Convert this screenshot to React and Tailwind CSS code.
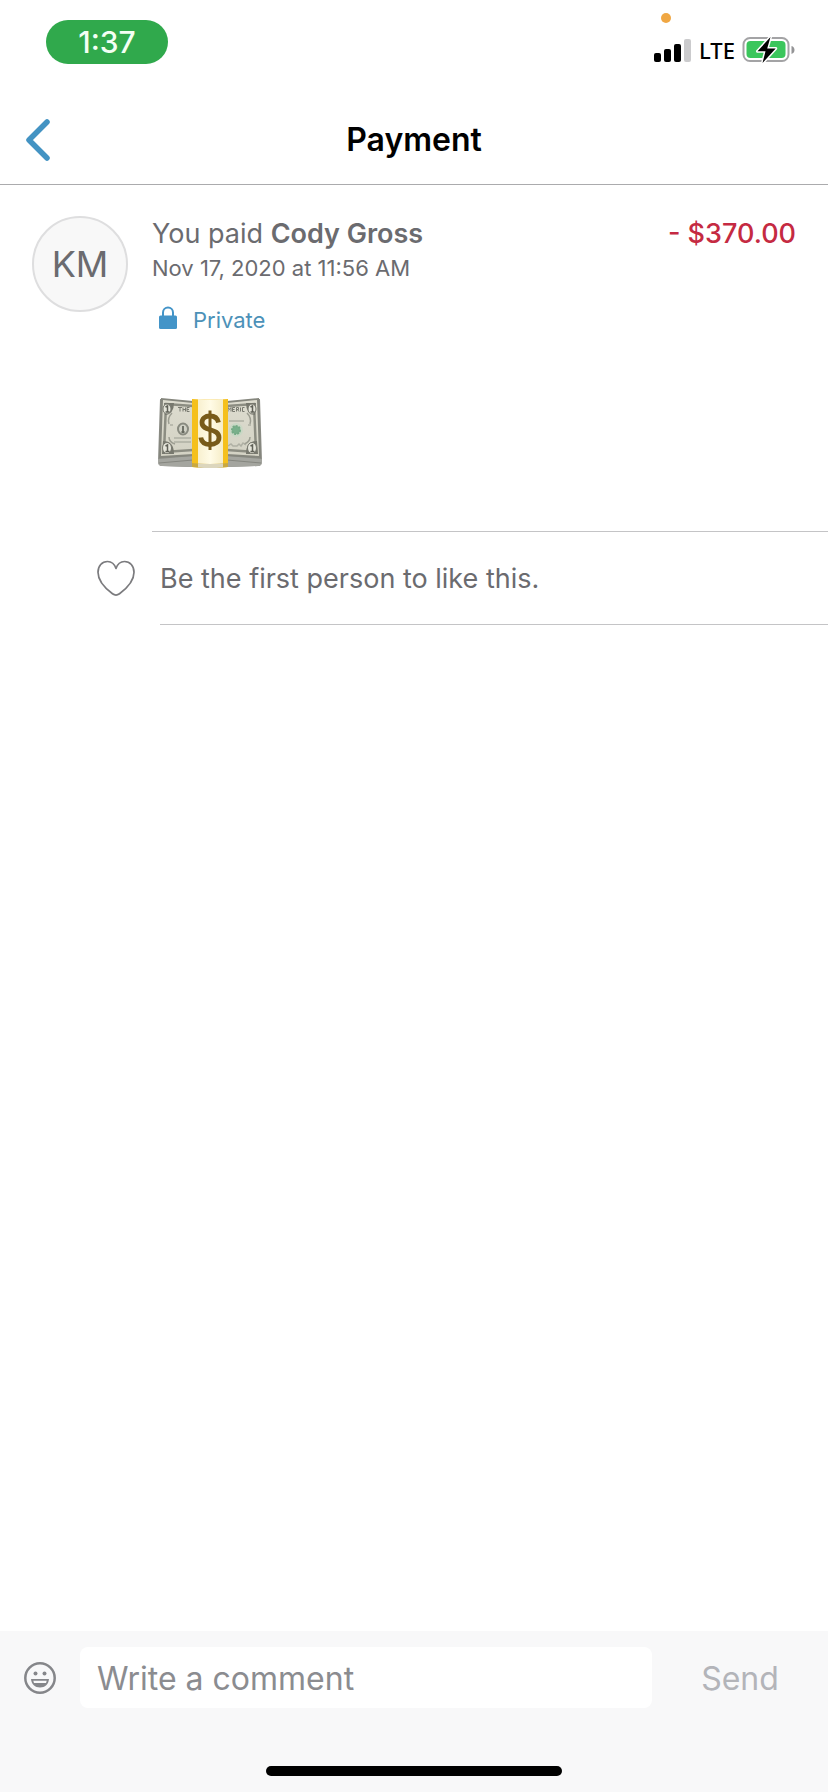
import React from "react";

function StatusBar() {
  return (
    <div className="flex h-24 items-start justify-between pl-[46px] pr-8">
      <div className="mt-5 flex h-11 w-[122px] items-center justify-center rounded-full bg-[#30a94c] text-[30px] leading-none font-medium text-[#f3fff4]">
        1:37
      </div>
      <div className="flex flex-col">
        <span className="mt-[13px] ml-[7px] size-[10px] rounded-full bg-[#f0a743]" />
        <div className="mt-3 flex items-center gap-[7px]">
          <svg width="38" height="28" viewBox="0 0 38 28" aria-label="Signal strength">
            <rect x="0" y="17" width="7" height="9" rx="2" />
            <rect x="10" y="13" width="7" height="13" rx="2" />
            <rect x="20" y="8" width="7" height="18" rx="2" />
            <rect x="30" y="3" width="7" height="23" rx="2" fill="#cbcbcd" />
          </svg>
          <span className="font-['Noto_Sans','Open_Sans',sans-serif] text-[22px] leading-7 font-medium">LTE</span>
          <svg width="54" height="30" viewBox="0 0 54 30" aria-label="Battery charging">
            <rect x="1.5" y="3" width="45" height="23" rx="6.5" fill="#fff" stroke="#a3a3a5" strokeWidth="2" />
            <rect x="4.500" y="6" width="39" height="17" rx="4" fill="#3bc65c" />
            <path d="M49.500 11v8c2-.6 3-2.200 3-4s-1-3.400-3-4z" fill="#949496" />
            <path
              d="M28.500 2 15.500 16.300h8L20.500 28l13.200-14.600h-8.500z"
              fill="#000"
              stroke="#fff"
              strokeWidth="3"
              strokeLinejoin="round"
              paintOrder="stroke"
            />
          </svg>
        </div>
      </div>
    </div>
  );
}

function Header() {
  return (
    <header className="border-b border-[#ababad] text-black">
      <StatusBar />
      <div className="grid h-[88px] grid-cols-[1fr_auto_1fr] items-center px-6">
        <button type="button" aria-label="Back" className="justify-self-start">
          <svg width="28" height="44" viewBox="0 0 28 44" fill="none" className="block">
            <path d="M23 4 5 22l18 18" stroke="#4393c3" strokeWidth="5.500" strokeLinecap="round" strokeLinejoin="round" />
          </svg>
        </button>
        <h1 className="text-[32px] leading-10 font-semibold text-black">Payment</h1>
      </div>
    </header>
  );
}

function CashStack() {
  return (
    <svg width="104" height="72" viewBox="0 0 104 72" role="img" aria-label="Stack of dollar bills" className="block">
      <defs>
        <linearGradient id="paper" x1="0" y1="0" x2="0" y2="1">
          <stop offset="0" stopColor="#dddccf" />
          <stop offset="1" stopColor="#d3d2c4" />
        </linearGradient>
        <linearGradient id="band" x1="0" y1="0" x2="1" y2="0">
          <stop offset="0" stopColor="#f8f0cf" />
          <stop offset=".5" stopColor="#fffbe6" />
          <stop offset="1" stopColor="#f6edc8" />
        </linearGradient>
      </defs>
      <path d="M2 1 34 4h36l32-3 2 62q0 5-4 5l-30 1H34L4 68q-4 0-4-5z" fill="#8a8b84" />
      <path d="M0 61 35 58h34l35 3v3q0 4-4 4l-31 1H35L4 68q-4 0-4-4z" fill="#a4a59f" />
      <path d="M1 65 35 62h34l34 3" fill="none" stroke="#85867f" />
      <path d="M3 0 35 3h34l32-3 2 60-34-2H35L1 60z" fill="#85867d" />
      <path d="M5 2 35 5h34l30-3 2 56-32-2H35L3 58z" fill="url(#paper)" />
      <path d="M8 6 35 8h34l27-2 2 48-29-2H35L6 54z" fill="none" stroke="#8c8d82" strokeWidth="2.500" />
      <path d="M6 5h10q0 11-9 12zM98 5H88q0 11 9 12zM4 56h12q0-13-11-13zM100 56H88q0-13 11-13z" fill="#77786e" />
      <g fill="#e5e5da" stroke="#77786e">
        <ellipse cx="9" cy="11" rx="4" ry="5" />
        <ellipse cx="94" cy="11" rx="4" ry="5" />
        <ellipse cx="9" cy="50" rx="4.500" ry="5.500" />
        <ellipse cx="94" cy="50" rx="4.500" ry="5.500" />
      </g>
      <path
        d="m7.500 9 2-1v6m-2 0h4M92.500 9l2-1v6m-2 0h4M7.500 48l2-1v6.500m-2 0h4M92.500 48l2-1v6.500m-2 0h4"
        fill="none"
        stroke="#5f6057"
        strokeWidth="1.500"
      />
      <g stroke="#797a70" strokeWidth="1" fill="none">
        <path d="M20 9.500h4m-2 0v4m3-4v4m0-2h2.500m0-2v4m4-4h-2.500v4h2.500m-2.500-2h2" />
        <path d="M70 13.500v-4l1.500 2 1.500-2v4m4-4h-2.500v4h2.500m-2.500-2h2m2 2v-4h2v2h-2m1 0 1.500 2m1.500-4v4m4-4h-2v4h2" />
      </g>
      <path d="M14 15q-5 5-3 11M89 15q5 5 3 11M11 39q0 5 6 7M92 39q0 5-6 7" fill="none" stroke="#9d9e92" strokeWidth="1.500" />
      <ellipse cx="25" cy="31" rx="5" ry="5.500" fill="#d0d1c5" stroke="#898b80" strokeWidth="2" />
      <path d="M25 28v6m-1.500 0h3" fill="none" stroke="#66695f" strokeWidth="1.800" />
      <circle cx="78" cy="32" r="7" fill="#c9d8c5" />
      <circle cx="78" cy="32" r="4" fill="#79b08b" stroke="#74aa85" strokeDasharray="2 1" strokeWidth="2" />
      <path d="M16 40h17M16 44h17M12 27h3M71 23h15M70 48l3-2 2 2h4l2-2 2 2 2-3 3 2M90 27h3" stroke="#afb0a4" strokeWidth="1.500" fill="none" />
      <path d="M34 1q18 1 36 0v68q-18 2-36 0z" fill="#f5c01d" />
      <path d="M40 1q12 1 25 0v65q-13 1-25 0z" fill="url(#band)" />
      <path d="M34 65q18 2 36 0v4q-18 2-36 0z" fill="#c9a840" />
      <path d="M40 65.500q12 1 25 0v4q-13 1-25 0z" fill="#dcd6bd" />
      <g fill="none" stroke="#785b19">
        <path d="M60.500 24.500c-1-4.500-4.500-6.500-8.500-6.500-5 0-8 2.600-8 6.500 0 4.700 4 6 8.200 7.200 4.600 1.300 8.800 2.800 8.800 7.800 0 4.500-3.600 7-9 7-5.200 0-8.500-2.500-9.200-7" strokeWidth="4.800" />
        <path d="M52 12.500V52" strokeWidth="3" />
      </g>
    </svg>
  );
}

function Payment() {
  return (
    <section className="flex pt-[31px] pl-8">
      <div className="flex size-24 shrink-0 items-center justify-center rounded-full border-2 border-[#dededf] bg-[#f8f8f8] text-[36px] text-[#6b6b6f]">
        KM
      </div>
      <div className="ml-6 flex-1">
        <div className="pr-8">
          <div className="flex justify-between text-[27px] leading-9">
            <p>
              You paid <span className="font-semibold">Cody Gross</span>
            </p>
            <p className="font-medium text-[#c52a42]">- $370.00</p>
          </div>
          <p className="text-[22px] leading-8">Nov 17, 2020 at 11:56 AM</p>
          <p className="mt-5 flex items-center pl-[7px] text-[22px] leading-8 text-[#4c91b8]">
            <svg width="18" height="24" viewBox="0 0 18 24" fill="none" aria-hidden="true" className="-mt-1">
              <path d="M4 11V6.500a5 5 0 0 1 10 0V11" stroke="#4394c8" strokeWidth="2" />
              <rect y="9.500" width="18" height="13.500" rx="1.500" fill="#4394c8" />
            </svg>
            <span className="ml-4">Private</span>
          </p>
        </div>
        <div className="border-b border-[#c4c4c6] pt-[62px] pb-[61px] pl-[6px]">
          <CashStack />
        </div>
      </div>
    </section>
  );
}

function Likes() {
  return (
    <section className="flex pl-24">
      <button type="button" aria-label="Like" className="w-16 shrink-0">
        <svg width="40" height="38" viewBox="0 0 40 38" fill="none" className="block">
          <path
            d="M20 8.500C18.500 4 15.500 1.500 11.500 1.500 6 1.500 2 6 2 12.300 2 21.500 10 29 16.500 33.800q3.500 2.600 7 0C30 29 38 21.500 38 12.300 38 6 34 1.500 28.500 1.500c-4 0-7 2.500-8.500 7z"
            stroke="#7b7b7e"
            strokeWidth="1.700"
            strokeLinejoin="round"
          />
        </svg>
      </button>
      <p className="flex h-[93px] flex-1 items-center border-b border-[#c4c4c6] pt-[2px] text-[27px]">
        Be the first person to like this.
      </p>
    </section>
  );
}

function Composer() {
  return (
    <footer className="bg-[#f8f8f9]">
      <form className="flex items-center pt-4 pl-6" onSubmit={(e) => e.preventDefault()}>
        <button type="button" aria-label="Insert emoji">
          <svg width="32" height="32" viewBox="0 0 32 32" fill="none" className="block">
            <circle cx="16" cy="16" r="14.700" stroke="#85868a" strokeWidth="2.500" />
            <circle cx="11.500" cy="11.500" r="2" fill="#85868a" />
            <circle cx="20.500" cy="11.500" r="2" fill="#85868a" />
            <path d="M7 17h18c-.4 5-4 8.500-9 8.500S7.400 22 7 17z" fill="#85868a" />
            <path d="M9.300 18.800h13.400l-.7 2.200H10z" fill="#f8f8f9" />
          </svg>
        </button>
        <input
          type="text"
          aria-label="Write a comment"
          placeholder="Write a comment"
          className="ml-6 h-[61px] min-w-0 flex-1 rounded-lg bg-white pt-[2px] pr-4 pl-[17px] text-[32px] text-[#6b6b6f] outline-none placeholder:text-[#8b8c90]"
        />
        <button type="submit" className="w-44 pt-[2px] text-[32px] text-[#b3b4b9]">
          Send
        </button>
      </form>
      <div className="flex justify-center pt-[58px] pb-4">
        <div className="h-[10px] w-[296px] rounded-full bg-black" />
      </div>
    </footer>
  );
}

export default function App() {
  return (
    <div className="flex min-h-screen flex-col bg-white font-['Inter',sans-serif] text-[#6b6b6f]">
      <Header />
      <main className="flex-1">
        <Payment />
        <Likes />
      </main>
      <Composer />
    </div>
  );
}
